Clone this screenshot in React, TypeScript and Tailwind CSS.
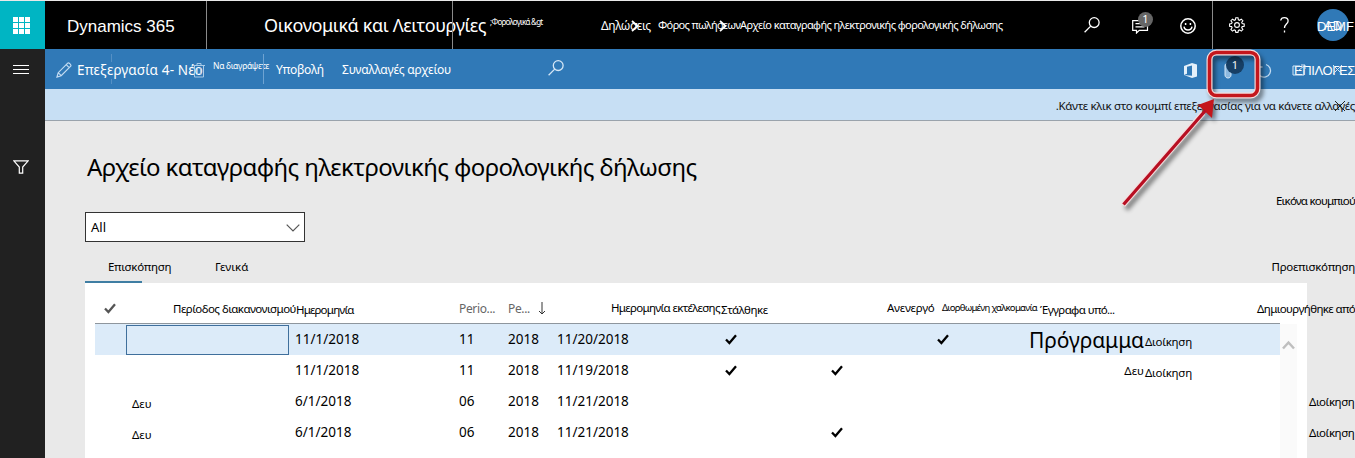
import React from "react";

const Check: React.FC<{ className?: string }> = ({ className = "" }) => (
  <svg className={className} width="12" height="11" viewBox="0 0 12 11" fill="none" stroke="currentColor" strokeWidth="2.3">
    <path d="M1 5.5 4.4 9 11 1.3" />
  </svg>
);

const Search: React.FC<{ className?: string }> = ({ className = "" }) => (
  <svg className={className} width="16" height="16" viewBox="0 0 16 16" fill="none" stroke="currentColor" strokeWidth="1.3">
    <circle cx="10.2" cy="5.6" r="4.9" />
    <path d="M6.7 9.1.6 15.2" />
  </svg>
);

const Crumb: React.FC = () => (
  <svg className="mt-px shrink-0" width="8" height="12" viewBox="0 0 8 12" fill="none" stroke="white" strokeWidth="1.8">
    <path d="m1 1 5.5 5L1 11" />
  </svg>
);

const TopBar: React.FC = () => (
  <header className="flex h-12 items-center overflow-hidden bg-black whitespace-nowrap text-white">
    <div className="flex h-12 w-[45px] shrink-0 items-center justify-center bg-[#00b5c3]">
      <div className="grid grid-cols-3 gap-[1px] pr-[3px]">
        {Array.from({ length: 9 }, (_, i) => (
          <span key={i} className="size-[5px] bg-white" />
        ))}
      </div>
    </div>
    <div className="h-full w-[161px] shrink-0 pt-[14px] pl-[22px] font-[Liberation_Sans] text-[17px] leading-6">Dynamics 365</div>
    <div className="h-full w-px shrink-0 bg-[#8a8a8a]" />
    <div className="w-[245px] shrink-0 pl-[57px] text-[18px] tracking-[-0.38px]">Οικονομικά και Λειτουργίες</div>
    <div className="h-full w-px shrink-0 bg-[#8a8a8a]" />
    <div className="w-[148px] shrink-0 pb-[7px] pl-[37px] text-[8px] tracking-[-0.75px]">;Φορολογικά &amp;gt</div>
    <div className="w-[30px] shrink-0 pt-[2px] text-[12px] tracking-[-0.4px]">Δηλώσεις</div>
    <Crumb />
    <div className="w-[80px] shrink-0 pt-px pl-[19px] text-[11px] tracking-[-0.65px]">Φόρος πωλήσεων</div>
    <Crumb />
    <div className="w-[357px] shrink-0 pt-px pl-[13px] text-[11px] tracking-[-0.6px]">
      Αρχείο καταγραφής ηλεκτρονικής φορολογικής δήλωσης
    </div>
    <Search className="shrink-0" />
    <div className="relative ml-8 shrink-0">
      <svg width="17" height="17" viewBox="0 0 17 17" fill="none" stroke="white" strokeWidth="1.2">
        <path d="M.7 3.7h14.8v9.6H7.3L4.5 16v-2.7H.7zM3.5 6.7h9M3.5 9.8h9" />
      </svg>
      <span className="absolute -top-[5px] left-[6px] flex size-[15px] items-center justify-center rounded-full bg-[#666] text-[11px]">1</span>
    </div>
    <svg className="mt-[2px] ml-[31px] shrink-0" width="16" height="16" viewBox="0 0 16 16" fill="none" stroke="white" strokeWidth="1.5">
      <circle cx="8" cy="8" r="7.2" />
      <path d="M4 8.7c.7 4.4 7.3 4.4 8 0" />
      <path d="M5.6 5v2M10.4 5v2" />
    </svg>
    <div className="ml-4 h-full w-px shrink-0 bg-[#8a8a8a]" />
    <svg className="ml-4 shrink-0" width="16" height="16" viewBox="0 0 16 16" fill="none" stroke="white" strokeWidth="1.1">
      <path d="m6.8.8-.4 2-1.2.5-1.7-1.2-1.6 1.6 1.2 1.7-.5 1.2-2 .4v2.2l2 .4.5 1.2-1.2 1.7 1.6 1.6 1.7-1.2 1.2.5.4 2h2.2l.4-2 1.2-.5 1.7 1.2 1.6-1.6-1.2-1.7.5-1.2 2-.4V7l-2-.4-.5-1.2 1.2-1.7-1.6-1.6-1.7 1.2-1.2-.5-.4-2z" />
      <circle cx="8" cy="8" r="2.4" />
    </svg>
    <svg className="ml-[35px] shrink-0" width="9" height="16" viewBox="0 0 9 16" fill="none" stroke="white" strokeWidth="1.3">
      <path d="M.7 3.5C1 1.6 2.5.7 4.4.7c2.2 0 3.7 1.2 3.7 3.2 0 3-3.6 3.4-3.6 7" />
      <path d="M4.5 13.5v2" />
    </svg>
    <div className="relative ml-[28px] flex size-[32px] shrink-0 items-center justify-center rounded-full bg-[#3079b7] pt-[2px] font-[Liberation_Sans] text-[13px]">
      AD
      <span className="absolute top-[8px] left-0">DEMF</span>
    </div>
  </header>
);

const ActionBar: React.FC = () => (
  <div className="relative flex h-10 items-center overflow-hidden bg-[#3079b7] whitespace-nowrap text-white">
    {/* faded divider running behind the edit label */}
    <div className="absolute top-[5px] left-[66px] flex h-[30px] w-px flex-col justify-between">
      <span className="h-2 bg-[#5590c5]" />
      <span className="h-[5px] bg-[#5590c5]" />
    </div>
    <svg className="mt-[2px] ml-[11px] shrink-0" width="16" height="16" viewBox="0 0 16 16" fill="none" stroke="#c3dcf2" strokeWidth="1.2">
      <path d="m1 15 1.2-4.3L11.700 1.2c1-1 4.100 1.9 3 3L5.2 13.7zM2.2 10.7l3 3M10.2 2.7l3 3" />
    </svg>
    <div className="w-[121px] shrink-0 pt-[2px] pl-[5px] text-[13.5px] tracking-[0.15px]">Επεξεργασία 4- Νέο</div>
    <svg className="mt-[2px] shrink-0" width="12" height="15" viewBox="0 0 12 15" fill="none" stroke="#a9cbe8">
      <path d="M0 2.5h12M4 2.5v-2h4v2M1.500 2.5V14h9V2.5M4.300 5v7M7.700 5v7" />
    </svg>
    <div className="w-[58px] shrink-0 pb-[6px] pl-[8px] text-[8.5px] tracking-[-0.3px]">Να διαγράψετε</div>
    <div className="h-[30px] w-px shrink-0 bg-[#6ea3d2]" />
    <div className="ml-[12px] w-[66px] shrink-0 pt-px text-[12px] tracking-[-0.25px]">Υποβολή</div>
    <div className="w-[206px] shrink-0 pt-px text-[12px] tracking-[-0.22px]">Συναλλαγές αρχείου</div>
    <Search className="mb-[3px] shrink-0 text-[#d5e7f6]" />
    <svg className="mt-[2px] ml-[620px] shrink-0" width="13" height="15" viewBox="0 0 13 15" fill="#e4f0fa">
      <path d="M0 3 8 0l5 1.500v12L8 15 0 12l8 .8V2.500L3 3.700v7L0 12z" />
    </svg>
    <div className="relative mt-[3px] ml-[27px] shrink-0">
      <svg width="8" height="17" viewBox="0 0 8 17" fill="#8db9df" stroke="#d5e7f6">
        <path d="M1 4c0-4 6-4 6 0v9c0 4-6 4-6 0z" />
      </svg>
      <span className="absolute -top-[6px] left-[2px] flex size-[18px] items-center justify-center rounded-full bg-[#173f65] text-[11px]">1</span>
    </div>
    <svg className="mt-[3px] ml-[24px] shrink-0" width="16" height="16" viewBox="0 0 16 16" fill="none" stroke="#c3dcf2" strokeWidth="1.3">
      <path d="M3 3.500a6.500 6.500 0 1 0 7-2M3 .5v3.500h3.500" />
    </svg>
    <div className="relative mt-[3px] ml-[22px] font-[Liberation_Sans] text-[13px] tracking-[-0.4px]">
      ΕΠΙΛΟΓΕΣ
      <svg className="absolute top-[3px] -left-[2px]" width="56" height="12" viewBox="0 0 56 12" fill="none" stroke="#d5e7f6">
        <path d="M8 2H1v9h11V6M6 7l7-6M9 1h4v4M41 1l9 9M50 1l-9 9" />
      </svg>
    </div>
  </div>
);

const InfoBar: React.FC = () => (
  <div className="flex h-8 items-center justify-end border-b border-[#9aa3ac] bg-[#c7dff4] whitespace-nowrap text-[#111]">
    <div className="relative pt-[2px] text-[11.5px] tracking-[-0.33px]">
      .Κάντε κλικ στο κουμπί επεξεργασίας για να κάνετε αλλαγές
      <svg className="absolute top-[5px] right-[9px]" width="12" height="12" viewBox="0 0 12 12" stroke="#222">
        <path d="m1 1 10 10M11 1 1 11" />
      </svg>
    </div>
  </div>
);

type Row = {
  name: string;
  date: string;
  period: string;
  run: string;
  sent?: boolean;
  test?: boolean;
  corrected?: boolean;
  type?: React.ReactNode;
  admin?: string;
  createdBy?: string;
};

const rows: Row[] = [
  {
    name: "",
    date: "11/1/2018",
    period: "11",
    run: "11/20/2018",
    sent: true,
    corrected: true,
    type: <span className="text-[21px] leading-[30px] tracking-[-0.1px]">Πρόγραμμα</span>,
    admin: "Διοίκηση",
  },
  {
    name: "",
    date: "11/1/2018",
    period: "11",
    run: "11/19/2018",
    sent: true,
    test: true,
    type: <span className="text-[11.5px]">Δευ</span>,
    admin: "Διοίκηση",
  },
  { name: "Δευ", date: "6/1/2018", period: "06", run: "11/21/2018", createdBy: "Διοίκηση" },
  { name: "Δευ", date: "6/1/2018", period: "06", run: "11/21/2018", test: true, createdBy: "Διοίκηση" },
];

const Grid: React.FC = () => (
  <div className="ml-10 flex h-[175px] w-[1222px] bg-white pl-[10px] whitespace-nowrap text-black">
    <div className="w-[1185px] shrink-0 pt-[10px]">
      <div className="flex h-[31px] items-center border-b border-[#8e969d] text-[11.5px]">
        <div className="w-[78px] shrink-0 pl-[9px]">
          <Check className="text-[#555]" />
        </div>
        <div className="w-[123px] shrink-0 pt-[2px] tracking-[-0.52px]">Περίοδος διακανονισμού</div>
        <div className="w-[163px] shrink-0 pt-[3px] tracking-[-0.8px]">Ημερομηνία</div>
        <div className="w-[49px] shrink-0 pt-px text-[12px] tracking-[-0.35px] text-[#666]">Perio...</div>
        <div className="w-[30px] shrink-0 pt-px text-[12px] tracking-[-0.35px] text-[#666]">Pe...</div>
        <svg className="w-[8px] shrink-0" height="13" viewBox="0 0 8 13" fill="none" stroke="#333">
          <path d="M4 0v12M1 9l3 3 3-3" />
        </svg>
        <div className="ml-[65px] w-[110px] shrink-0 tracking-[-0.65px]">Ημερομηνία εκτέλεσης</div>
        <div className="w-[166px] shrink-0 pt-[3px] tracking-[-0.45px]">Στάλθηκε</div>
        <div className="w-[55px] shrink-0 tracking-[-0.25px]">Ανενεργό</div>
        <div className="w-[98px] shrink-0 text-[9.5px] tracking-[-0.7px]">Διορθωμένη χαλκομανία</div>
        <div className="w-[217px] shrink-0 pt-[3px] tracking-[-0.6px]">Έγγραφα υπό...</div>
        <div className="shrink-0 pt-[2px] tracking-[-0.6px]">Δημιουργήθηκε από</div>
      </div>
      {rows.map((row, i) => (
        <div key={i} className={`flex h-[31px] items-center text-[13.5px] ${i === 0 ? "bg-[#dcebf9]" : ""}`}>
          <div
            className={`mr-[6px] ml-[31px] flex h-[30px] w-[163px] shrink-0 items-center pt-1 pl-[6px] text-[11.5px] ${
              i === 0 ? "border border-[#3f6f9c]" : ""
            }`}
          >
            {row.name}
          </div>
          <div className="w-[164px] shrink-0">{row.date}</div>
          <div className="w-[49px] shrink-0">{row.period}</div>
          <div className="w-[49px] shrink-0">2018</div>
          <div className="w-[168px] shrink-0">{row.run}</div>
          <div className="w-[106px] shrink-0">{row.sent && <Check />}</div>
          <div className="w-[106px] shrink-0">{row.test && <Check />}</div>
          <div className="w-[73px] shrink-0">{row.corrected && <Check />}</div>
          <div className="w-[134px] shrink-0 text-right">{row.type}</div>
          <div className="w-[165px] shrink-0 pt-[5px] pl-px text-[11.5px] tracking-[-0.25px]">{row.admin}</div>
          <div className="shrink-0 text-[11.5px] tracking-[-0.45px]">{row.createdBy}</div>
        </div>
      ))}
    </div>
    <div className="mt-[41px] flex w-[17px] shrink-0 justify-center bg-[#fafafa] pt-[16px]">
      <svg width="13" height="10" viewBox="0 0 13 10" fill="none" stroke="#bfbfbf" strokeWidth="2.5">
        <path d="m1 8.500 5.500-6 5.500 6" />
      </svg>
    </div>
  </div>
);

const Callout: React.FC = () => (
  <svg
    className="absolute top-[40px] left-[1100px] drop-shadow-[3px_4px_2px_rgba(0,0,0,0.45)]"
    width="180"
    height="180"
    viewBox="1100 40 180 180"
    fill="none"
  >
    <rect x="1209.5" y="52.5" width="48" height="43" rx="7" stroke="#f5dede" strokeWidth="6" />
    <rect x="1209.5" y="52.5" width="48" height="43" rx="7" stroke="#c4161c" strokeWidth="3.6" />
    <path d="m1123 205 80-92" stroke="#f5dede" strokeWidth="5.5" />
    <path d="m1214 99-16 6 14 13z" fill="#c4161c" />
    <path d="m1123.500 204.500 82-94" stroke="#b80f22" strokeWidth="3.3" />
  </svg>
);

const App: React.FC = () => {
  return (
    <div className="relative h-[458px] w-[1355px] overflow-hidden bg-[#e9e9e9] pt-px font-['Noto_Sans',sans-serif]">
      <TopBar />
      <div className="flex h-[409px]">
        <aside className="flex w-[45px] shrink-0 flex-col bg-[#212121] pl-[13px]">
          <div className="mt-[16px] flex w-4 flex-col gap-[3px]">
            <span className="h-px bg-white" />
            <span className="h-px bg-white" />
            <span className="h-px bg-white" />
          </div>
          <svg className="mt-[86px]" width="16" height="14" viewBox="0 0 16 14" fill="none" stroke="white" strokeWidth="1.2">
            <path d="M.8.8h14.400L9.700 7v6.200H6.300V7z" />
          </svg>
        </aside>
        <main className="w-[1310px] shrink-0">
          <ActionBar />
          <InfoBar />
          <div className="flex h-[91px] items-start justify-between pl-[42px] whitespace-nowrap">
            <h1 className="mt-[28px] text-[24px] leading-9 tracking-[-0.57px]">Αρχείο καταγραφής ηλεκτρονικής φορολογικής δήλωσης</h1>
            <div className="mt-[71px] text-[11.5px] tracking-[-0.8px]">Εικόνα κουμπιού</div>
          </div>
          <div className="ml-10 flex h-[30px] w-[220px] items-center justify-between border border-[#333] bg-white pt-[2px] pr-1 pl-[5px] text-[13px]">
            All
            <svg className="mb-px" width="14" height="8" viewBox="0 0 14 8" fill="none" stroke="#555" strokeWidth="1.2">
              <path d="m.7.7 6.300 6.300L13.300.7" />
            </svg>
          </div>
          <div className="flex h-[41px] pt-[16px] pl-[63px] whitespace-nowrap text-[11.5px]">
            <div className="w-[107px] shrink-0 tracking-[-0.3px]">Επισκόπηση</div>
            <div className="flex-1">Γενικά</div>
            <div className="tracking-[-0.3px]">Προεπισκόπηση</div>
          </div>
          <div className="-mt-[2px] ml-10 h-[2px] w-[57px] bg-[#3f7ea3]" />
          <Grid />
        </main>
      </div>
      <Callout />
    </div>
  );
};

export default App;
